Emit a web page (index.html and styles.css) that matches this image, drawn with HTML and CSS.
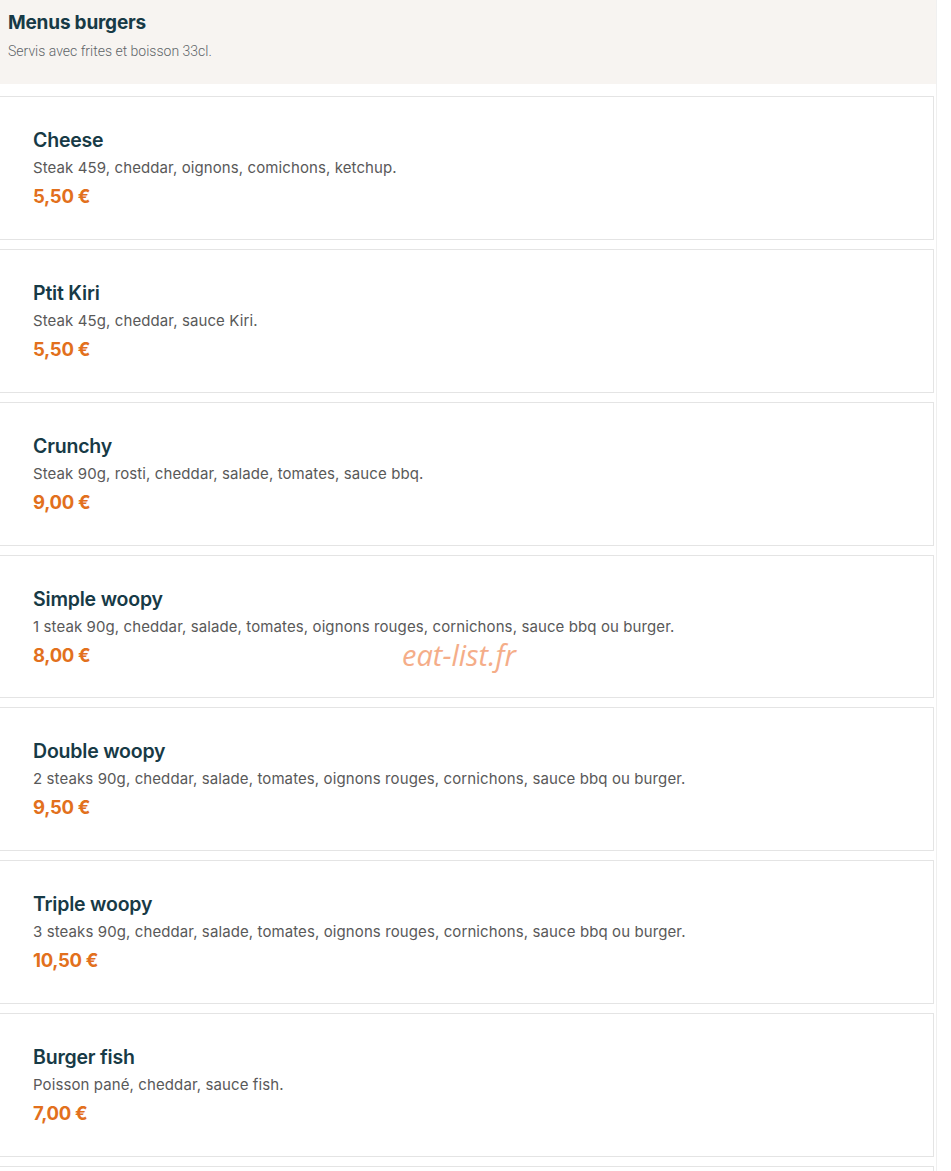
FILE: index.html
```html
<!DOCTYPE html>
<html>
<head>
	<meta charset="utf-8">
	<title>Menus burgers</title>
	<link rel="stylesheet" href="styles.css">
</head>
<body>
<div class="page">
	<div class="cat-head">
		<h2>Menus burgers</h2>
		<p>Servis avec frites et boisson 33cl.</p>
	</div>

	<div class="items">
		<div class="item">
			<h3>Cheese</h3>
			<p class="desc">Steak 459, cheddar, oignons, comichons, ketchup.</p>
			<div class="price">5,50 €</div>
		</div>
		<div class="item">
			<h3>Ptit Kiri</h3>
			<p class="desc">Steak 45g, cheddar, sauce Kiri.</p>
			<div class="price">5,50 €</div>
		</div>
		<div class="item">
			<h3>Crunchy</h3>
			<p class="desc">Steak 90g, rosti, cheddar, salade, tomates, sauce bbq.</p>
			<div class="price">9,00 €</div>
		</div>
		<div class="item">
			<h3>Simple woopy</h3>
			<p class="desc">1 steak 90g, cheddar, salade, tomates, oignons rouges, cornichons, sauce bbq ou burger.</p>
			<div class="price">8,00 €</div>
		</div>
		<div class="item">
			<h3>Double woopy</h3>
			<p class="desc">2 steaks 90g, cheddar, salade, tomates, oignons rouges, cornichons, sauce bbq ou burger.</p>
			<div class="price">9,50 €</div>
		</div>
		<div class="item">
			<h3>Triple woopy</h3>
			<p class="desc">3 steaks 90g, cheddar, salade, tomates, oignons rouges, cornichons, sauce bbq ou burger.</p>
			<div class="price">10,50 €</div>
		</div>
		<div class="item">
			<h3>Burger fish</h3>
			<p class="desc">Poisson pané, cheddar, sauce fish.</p>
			<div class="price">7,00 €</div>
		</div>
		<!-- next item starts below the fold -->
		<div class="item"></div>
	</div>

	<div class="watermark">eat-list.fr</div>
</div>
</body>
</html>
```

FILE: styles.css
```css
body {margin: 0; background: #fff; font-family: Inter, "Noto Sans", sans-serif; overflow: hidden;}
.page {position: relative; width: 936px; border-right: 1px solid #f0f0f0; height: 1171px; overflow: hidden;}

.cat-head {background: #f7f4f1; padding: 11px 8px 21px; height: 52px;}
.cat-head h2 {margin: 0; font-size: 19px; line-height: 24px; font-weight: 700; color: #173a46; letter-spacing: -0.2px;}
.cat-head p {margin: 7px 0 0; font-family: Roboto, sans-serif; font-weight: 300; font-size: 14px; line-height: 18px; color: #5e6468;}

.items {display: flex; flex-direction: column; gap: 9px; padding-top: 12px;}
.item {border: 1px solid #e4e4e4; border-left: none; width: 934px; padding: 31px 0 32px 33px; box-sizing: border-box; height: 143.85px; flex-shrink: 0;}
.item h3 {margin: 0; font-size: 19.5px; line-height: 24px; font-weight: 600; color: #173a46; letter-spacing: -0.2px;}
.item .desc {margin: 6px 0 0; font-size: 15px; line-height: 20px; color: #595959; font-weight: 400; letter-spacing: 0.1px;}
.item .price {margin-top: 8px; font-size: 18.5px; line-height: 20px; font-weight: 700; color: #e2701d; letter-spacing: -0.3px;}

.watermark {position: absolute; left: 402px; top: 636px; font-family: "Open Sans", sans-serif; font-style: italic; font-weight: 400; font-size: 29px; line-height: 38px; color: #f4a57c; opacity: 0.9;}
```
